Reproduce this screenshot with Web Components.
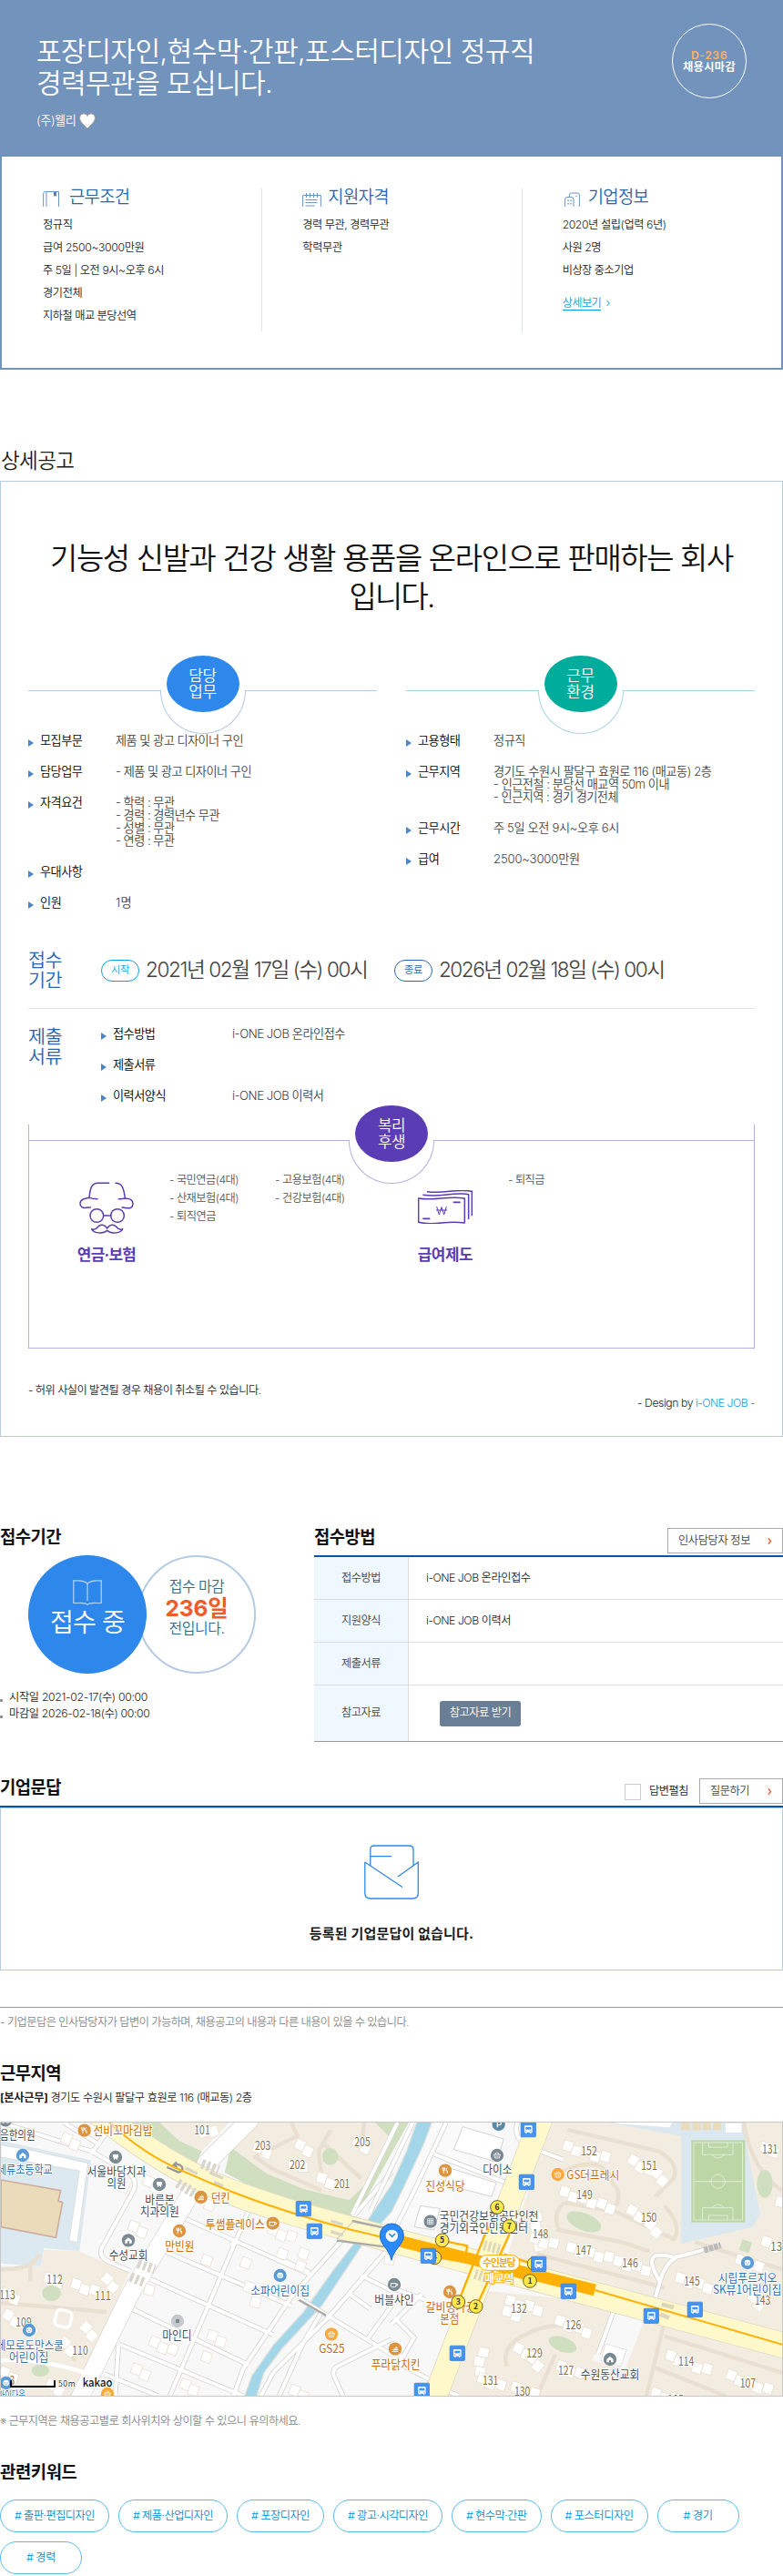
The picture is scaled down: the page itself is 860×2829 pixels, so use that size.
<!DOCTYPE html>
<html lang="ko">
<head>
<meta charset="utf-8">
<title>채용공고</title>
<style>
html,body{margin:0;padding:0;background:#fff}
body{width:860px;height:2829px;overflow:hidden;font-family:Inter,"Noto Sans CJK KR",sans-serif;font-size:13px;font-weight:350;line-height:1;color:#1c1c1c}
</style>
</head>
<body>
<job-page></job-page>
<script>
const make = (name, css, html) => {
  const tpl = document.createElement('template');
  tpl.innerHTML = `<style>:host{display:block;box-sizing:border-box}*{box-sizing:border-box}${css}</style>` + html;
  customElements.define(name, class extends HTMLElement {
    constructor() {
      super();
      this.attachShadow({mode: 'open'}).append(tpl.content.cloneNode(true));
    }
  });
};

make('job-page', '', `
<job-hero></job-hero>
<job-summary></job-summary>
<job-detail></job-detail>
<job-apply></job-apply>
<job-qna></job-qna>
<job-area></job-area>
<job-keywords></job-keywords>`);

make('job-hero', `
:host{background:#7193bc;height:172px;color:#fff}
.row{display:flex;justify-content:space-between;padding:39px 40px 0 40px}
h1{margin:0;font-size:32px;line-height:35px;font-weight:350}
h1 x-t{display:block}
.co{display:flex;align-items:center;gap:3px;height:20px;margin-top:14px;font-size:14px;font-weight:350}
.d{width:82px;height:82px;border:1px solid #fff;border-radius:50%;margin-top:-13px;display:flex;flex-direction:column;align-items:center;padding-top:27px;font-weight:700;font-size:13px;line-height:13px}
.d b{color:#ffb163;font-weight:600}`, `
<div class="row"><div>
<h1><x-t w="547">포장디자인,현수막·간판,포스터디자인 정규직</x-t><x-t w="259">경력무관을 모십니다.</x-t></h1>
<div class="co"><x-t w="43.500">(주)웰리</x-t><svg width="18" height="18" viewBox="0 0 18 18"><path d="M9 17.2C6 13.5.6 10 .6 5.600.6 2.700 2.600.9 5 .9 6.800.9 8.300 1.900 9 3.400 9.700 1.900 11.200.9 13 .9c2.400 0 4.400 1.800 4.400 4.700C17.400 10 12 13.500 9 17.200z" fill="#fff" stroke="#b39c84" stroke-width=".9"/></svg></div>
</div>
<div class="d"><b><x-t w="40">D-236</x-t></b><x-t w="58">채용시마감</x-t></div></div>`);

make('job-summary', `
:host{border:2px solid #7193bc;border-top:0;height:234px;padding-top:35px}
.g{display:grid;grid-template-columns:repeat(3,1fr);height:157px}
.c{padding-left:45px}.c+.c{border-left:1px solid #dde3ec}
h2{margin:0 0 7px;display:flex;align-items:center;font-size:20px;line-height:20px;font-weight:350;color:#2a64ad}
h2 svg{margin-top:3px}
p{margin:0;height:25px;line-height:25px;margin-bottom:0}
.m{color:#009fe3;display:flex;align-items:center;gap:6px;margin-top:16px}
.m x-t{border-bottom:1px solid #009fe3;line-height:15px}`, `
<div class="g">
<div class="c"><h2 style="gap:11px"><svg width="18" height="17" viewBox="0 0 18 17" fill="none" stroke="#6d96c6"><path d="M.6 17V2.500Q.6.5 2.500.5H17.500V17M4 .5V17"/><path d="M12 1h3v5l-1.500-1.500L12 6z" fill="#4f7fb8" stroke="none"/></svg><x-t w="66.500">근무조건</x-t></h2>
<p><x-t w="32.500">정규직</x-t></p><p><x-t w="111.500">급여 2500~3000만원</x-t></p><p><x-t w="133">주 5일 | 오전 9시~오후 6시</x-t></p><p><x-t w="43.500">경기전체</x-t></p><p><x-t w="102.500">지하철 매교 분당선역</x-t></p></div>
<div class="c" style="padding-left:44px"><h2 style="gap:7px"><svg width="21" height="17" viewBox="0 0 21 17" fill="none" stroke="#6d96c6"><path d="M.6 17V4.500H20.400V17M4.500 2v5M8.500 2v5M12.500 2v5M16.500 2v5M3.500 9.500h13M3.500 12.500h13M3.500 16h10"/></svg><x-t w="66.500">지원자격</x-t></h2>
<p><x-t w="95">경력 무관, 경력무관</x-t></p><p><x-t w="43.500">학력무관</x-t></p></div>
<div class="c" style="padding-left:44px"><h2 style="gap:9px;padding-left:2px"><svg width="17" height="17" viewBox="0 0 17 17" fill="none" stroke="#6d96c6"><path d="M.6 17V9Q.6 6.500 3 6.500H7.500Q10 6.500 10 9V17M5.500 6.500V4Q5.500 2 7.500 2H14Q16.400 2 16.400 4V17"/><path d="M4 9.500v1.500M7 9.500v1.500M4 13v1.500M7 13v1.500M13 5v1" stroke-width="1.400"/></svg><x-t w="66.500">기업정보</x-t></h2>
<p><x-t w="114">2020년 설립(업력 6년)</x-t></p><p><x-t w="42.500">사원 2명</x-t></p><p><x-t w="78">비상장 중소기업</x-t></p>
<div class="m"><x-t w="42.500">상세보기</x-t><svg width="4" height="6" viewBox="0 0 4 6"><path d="M.5 0 3.300 3 .5 6" fill="none" stroke="#009fe3"/></svg></div></div>
</div>`);

make('round-badge', `
:host{position:relative;height:1px;background:var(--line)}
.arc{position:absolute;left:50%;top:0;width:94px;height:48px;margin-left:-47px;border:1px solid var(--line);border-top:0;border-radius:0 0 47px 47px;background:#fff}
.gap{position:absolute;left:50%;top:-2px;width:88px;height:4px;margin-left:-44px;background:#fff}
.dot{position:absolute;left:50%;top:-38px;width:80px;height:62px;margin-left:-40px;border-radius:50%;background:var(--fill);color:#fff;display:flex;flex-direction:column;align-items:center;justify-content:center;font-size:18px;line-height:18px;font-weight:350;padding-top:0}`,
`<div class="arc"></div><div class="gap"></div><div class="dot"><slot></slot></div>`);

make('spec-row', `
:host{display:flex;min-height:34px;padding-bottom:20px;font-size:14px;line-height:14px}
svg{flex:none;margin:6px 7px 0 0}
.l{width:var(--label,83px);flex:none;color:#000}
.v{color:#444;display:flex;flex-direction:column;align-items:flex-start}`,
`<svg width="6" height="8" viewBox="0 0 6 8"><path d="M0 0 6 4 0 8z" fill="#4a86c8"/></svg><div class="l"><slot name="l"></slot></div><div class="v"><slot></slot></div>`);

make('job-detail', `
h2{margin:0;padding:87px 0 0 1px;font-size:24px;line-height:26px;font-weight:350;height:122px}
.box{border:1px solid #b4cbe3;height:1050px;padding:63px 30px 0}
h3{margin:0;font-size:35px;line-height:42px;font-weight:350;text-align:center;color:#111}
h3 x-t{display:block;margin:0 auto}
.two{display:grid;grid-template-columns:383px 383px;justify-content:space-between;margin-top:82px}
.rows{padding-top:47px}
.when{display:flex;align-items:center;height:62px;margin-top:17px}
.k{width:80px;flex:none;font-size:22px;line-height:22px;color:#2a64ad}.k x-t{display:block}
.pill{width:42px;height:24px;border:1px solid #0aa0dd;color:#0aa0dd;border-radius:12px;display:flex;align-items:center;justify-content:center;font-size:12px;margin-right:7px}
.date{font-size:24px;line-height:24px;color:#444;margin-top:-3px}
.docs{border-top:1px solid #dce6ef;display:flex;padding-top:20px;margin-top:10px;height:128px}
.docs .k{padding-top:0}
.wel{height:246px;border:1px solid #b9aee0;border-top:0;padding-top:17px}
.wg{display:grid;grid-template-columns:53px 64px 37px 116px 157px 60px 39px 1fr;padding-top:33px}
.i{display:flex;flex-direction:column;align-items:center;color:#5a3cb4;font-weight:700;font-size:18px;line-height:20px}
.li{color:#555;line-height:20px;display:flex;flex-direction:column;align-items:flex-start}
.note{line-height:14px;margin-top:39px}
.by{display:flex;justify-content:flex-end;gap:3px;line-height:14px}`, `
<h2><x-t w="80.500">상세공고</x-t></h2>
<div class="box">
<h3><x-t w="750">기능성 신발과 건강 생활 용품을 온라인으로 판매하는 회사</x-t><x-t w="93">입니다.</x-t></h3>
<div class="two">
<div><round-badge style="--line:#b4cbe3;--fill:#2e87ea"><x-t w="30.500">담당</x-t><x-t w="30.500">업무</x-t></round-badge>
<div class="rows">
<spec-row><x-t slot="l" w="46.500">모집부문</x-t><x-t w="140">제품 및 광고 디자이너 구인</x-t></spec-row>
<spec-row><x-t slot="l" w="46.500">담당업무</x-t><x-t w="149">- 제품 및 광고 디자이너 구인</x-t></spec-row>
<spec-row><x-t slot="l" w="46.500">자격요건</x-t><x-t w="64.500">- 학력 : 무관</x-t><x-t w="114">- 경력 : 경력년수 무관</x-t><x-t w="64.500">- 성별 : 무관</x-t><x-t w="64.500">- 연령 : 무관</x-t></spec-row>
<spec-row><x-t slot="l" w="46.500">우대사항</x-t></spec-row>
<spec-row><x-t slot="l" w="23.500">인원</x-t><x-t w="18">1명</x-t></spec-row>
</div></div>
<div><round-badge style="--line:#a9d8da;--fill:#00ad9d"><x-t w="30.500">근무</x-t><x-t w="30.500">환경</x-t></round-badge>
<div class="rows">
<spec-row><x-t slot="l" w="46.500">고용형태</x-t><x-t w="35">정규직</x-t></spec-row>
<spec-row><x-t slot="l" w="46.500">근무지역</x-t><x-t w="239.500">경기도 수원시 팔달구 효원로 116 (매교동) 2층</x-t><x-t w="193">- 인근전철 : 분당선 매교역 50m 이내</x-t><x-t w="137">- 인근지역 : 경기 경기전체</x-t></spec-row>
<spec-row><x-t slot="l" w="46.500">근무시간</x-t><x-t w="138">주 5일 오전 9시~오후 6시</x-t></spec-row>
<spec-row><x-t slot="l" w="23.500">급여</x-t><x-t w="95">2500~3000만원</x-t></spec-row>
</div></div>
</div>
<div class="when"><div class="k"><x-t w="37">접수</x-t><x-t w="37">기간</x-t></div>
<div class="pill"><x-t w="20">시작</x-t></div><div class="date" style="width:273px"><x-t w="243.500">2021년 02월 17일 (수) 00시</x-t></div>
<div class="pill" style="color:#2a64ad;border-color:#2a64ad"><x-t w="20">종료</x-t></div><div class="date"><x-t w="247.500">2026년 02월 18일 (수) 00시</x-t></div></div>
<div class="docs"><div class="k"><x-t w="37">제출</x-t><x-t w="37">서류</x-t></div>
<div style="--label:131px"><spec-row><x-t slot="l" w="46.500">접수방법</x-t><x-t w="124">i-ONE JOB 온라인접수</x-t></spec-row>
<spec-row><x-t slot="l" w="46.500">제출서류</x-t></spec-row>
<spec-row><x-t slot="l" w="58">이력서양식</x-t><x-t w="100.500">i-ONE JOB 이력서</x-t></spec-row></div></div>
<div class="wel"><round-badge style="--line:#b9aee0;--fill:#5a3cb4"><x-t w="30">복리</x-t><x-t w="30">후생</x-t></round-badge>
<div class="wg"><i></i>
<div class="i"><svg style="margin:12px 0 13px" width="60" height="57" viewBox="0 0 180 171" fill="none" stroke="#5a3cb4" stroke-width="4.500" stroke-linecap="round" stroke-linejoin="round"><path d="M98 4H61C40 4 36 22 33 52C17 55 3 58 3 71C3 82 12 87 22 85L37 84M120 4C142 4 147 22 151 54C168 54 177 60 177 72C177 84 168 88 158 86L141 84M33 52Q44 56 60 56M151 54Q140 57 130 56"/><circle cx="58" cy="111" r="22"/><circle cx="126" cy="111" r="22"/><path d="M80 111h24"/><path d="M92 153C84 140 70 138 62 148C54 158 46 158 41 155C46 168 78 174 92 160C106 174 138 168 143 155C138 158 130 158 122 148C114 138 100 140 92 153z"/></svg><x-t w="64.500">연금·보험</x-t></div><i></i>
<div class="li"><x-t w="76">- 국민연금(4대)</x-t><x-t w="76">- 산재보험(4대)</x-t><x-t w="51">- 퇴직연금</x-t></div>
<div class="li"><x-t w="76.500">- 고용보험(4대)</x-t><x-t w="76.500">- 건강보험(4대)</x-t></div>
<div class="i"><svg style="margin:21px 0 24px" width="60" height="37" viewBox="0 0 180 111" fill="none" stroke="#5a3cb4" stroke-width="4.500" stroke-linejoin="round"><path d="M2 27Q30 32 77 27T154 27V108Q122 103 77 108T2 106z"/><path d="M16 16Q50 21 95 15T167 14V96M30 5Q62 9 105 4T178 4V85"/><path d="M116 40h24M16 94h24" stroke-width="5"/><path d="M62 54l8 27 8-25 8 25 8-27M60 66h36" stroke-width="3"/></svg><x-t w="60.500">급여제도</x-t></div><i></i>
<div class="li"><x-t w="40">- 퇴직금</x-t></div></div></div>
<div class="note"><x-t w="255.500">- 허위 사실이 발견될 경우 채용이 취소될 수 있습니다.</x-t></div>
<div class="by"><x-t w="61">- Design by</x-t><x-t w="65" style="color:#0aa0dd">i-ONE JOB -</x-t></div>
</div>`);

make('line-button', `
:host{display:flex;align-items:center;justify-content:space-between;height:28px;border:1px solid #aaa;padding:0 11px;color:#444}`,
`<slot></slot><svg width="5" height="7" viewBox="0 0 5 7"><path d="M.8.3 3.500 3.500.8 6.700" fill="none" stroke="#f15a29" stroke-width="1.300"/></svg>`);

make('method-row', `
:host{display:flex;height:47px;border-bottom:1px solid #ddd}
.h{width:104px;background:#eff8fe;border-right:1px solid #ddd;display:flex;align-items:center;justify-content:center;color:#444}
.v{display:flex;align-items:center;padding-left:19px}`,
`<div class="h"><slot name="h"></slot></div><div class="v"><slot></slot></div>`);

make('job-apply', `
:host{display:flex;height:375px;padding-top:100px}
h2{margin:0;font-size:20px;line-height:22px;height:20px;font-weight:700;color:#111}
.l{width:345px}.r{width:515px}
.c{display:flex;padding:10px 0 0 31px}
.a{width:130px;height:130px;border-radius:50%;background:#2e87ea;color:#fff;display:flex;flex-direction:column;align-items:center;font-size:30px;line-height:30px;font-weight:350;padding-top:27px;z-index:1}
.b{width:130px;height:130px;border-radius:50%;border:2px solid #b4cbe3;margin-left:-10px;display:flex;flex-direction:column;align-items:center;font-size:17px;line-height:22px;font-weight:350;color:#34688f;padding-top:22px}
.b b{font-size:26px;line-height:24px;color:#f15a29;font-weight:700}
ul{list-style:none;margin:17px 0 0;padding:0}
li{display:flex;align-items:center;height:18px;gap:7px}
li i{width:3px;height:3px;background:#888;border-radius:1px;margin-top:7px}
.hd{display:flex;justify-content:space-between;height:30px}
.t{border-top:2px solid #0058a8}
.dl{margin-left:15px;width:89px;height:28px;border-radius:3px;background:#6a7f95;color:#fff;display:flex;align-items:center;justify-content:center}`, `
<div class="l"><h2><x-t w="67">접수기간</x-t></h2>
<div class="c"><div class="a"><svg width="32" height="28" viewBox="0 0 32 28" fill="none" stroke="#b5d5fa" stroke-width="1.200" style="margin-bottom:4px"><path d="M16 4V23M16 4Q12 .8 5 .8H.8V25.500H6Q14 25 16 27.500Q18 25 26 25.500H31.200V.8H27Q20 .8 16 4"/></svg><x-t w="82">접수 중</x-t></div>
<div class="b"><x-t w="60.500">접수 마감</x-t><b><x-t w="69">236일</x-t></b><x-t w="61">전입니다.</x-t></div></div>
<ul><li><i></i><x-t w="152">시작일 2021-02-17(수) 00:00</x-t></li><li><i></i><x-t w="154.500">마감일 2026-02-18(수) 00:00</x-t></li></ul></div>
<div class="r"><div class="hd"><h2><x-t w="67">접수방법</x-t></h2><line-button style="width:127px"><x-t w="79">인사담당자 정보</x-t></line-button></div>
<div class="t"><method-row><x-t slot="h" w="43">접수방법</x-t><x-t w="114.500">i-ONE JOB 온라인접수</x-t></method-row>
<method-row><x-t slot="h" w="43">지원양식</x-t><x-t w="93">i-ONE JOB 이력서</x-t></method-row>
<method-row><x-t slot="h" w="43">제출서류</x-t></method-row>
<method-row style="height:62px;border-color:#999"><x-t slot="h" w="43">참고자료</x-t><div class="dl"><x-t w="67.500">참고자료 받기</x-t></div></method-row></div></div>`);

make('job-qna', `
h2{margin:0;font-size:20px;line-height:22px;height:20px;font-weight:700;color:#111}
.hd{display:flex;height:30px}
.hd h2{flex:1}
.ck{width:18px;height:18px;border:1px solid #ccc;margin:6px 9px 0 0}
.lb{line-height:28px;margin-right:12px}
.box{border:1px solid #b4cbe3;height:179px;display:flex;flex-direction:column;align-items:center;padding-top:40px;font-size:16px;line-height:18px;font-weight:700}
.bar{border-top:2px solid #0058a8}
.note{margin-top:40px;border-top:1px solid #999;color:#888;line-height:14px;padding-top:9px;height:63px}`, `
<div class="hd"><h2><x-t w="67">기업문답</x-t></h2><div class="ck"></div><div class="lb"><x-t w="43">답변펼침</x-t></div><line-button style="width:92px"><x-t w="43">질문하기</x-t></line-button></div>
<div class="bar"></div>
<div class="box"><svg width="60" height="60" viewBox="0 0 60 60" fill="none" stroke="#2e87ea" stroke-width="1.300"><path d="M6.800 23V5Q6.800 1 10.800 1H49.500Q54 1 54 5V23M6.800 12.600H30"/><path d="M.8 19V53Q.8 59 6.800 59H53.500Q59.300 59 59.300 53V19L37 35M.8 19 42 46.500"/></svg><x-t w="180.500" style="margin-top:29px">등록된 기업문답이 없습니다.</x-t></div>
<div class="note"><x-t w="449">- 기업문답은 인사담당자가 답변이 가능하며, 채용공고의 내용과 다른 내용이 있을 수 있습니다.</x-t></div>`);

make('job-area', `
h2{margin:0;font-size:20px;line-height:22px;height:20px;font-weight:700;color:#111}
.ad{display:flex;gap:3px;line-height:14px;margin-top:10px;height:33px}
.n{color:#888;line-height:14px;margin-top:20px}`, `
<h2><x-t w="67">근무지역</x-t></h2>
<div class="ad"><b><x-t w="52.500">[본사근무]</x-t></b><x-t w="221">경기도 수원시 팔달구 효원로 116 (매교동) 2층</x-t></div>
<area-map></area-map>
<div class="n"><x-t w="330">※ 근무지역은 채용공고별로 회사위치와 상이할 수 있으니 유의하세요.</x-t></div>`);

make('job-keywords', `
:host{padding-top:39px}
h2{margin:0;font-size:20px;line-height:22px;height:20px;font-weight:700;color:#111}
.t{display:flex;flex-wrap:wrap;gap:10px;margin-top:20px}`, `
<h2><x-t w="84.500">관련키워드</x-t></h2>
<div class="t"><tag-pill><x-t w="88">&#35; 출판·편집디자인</x-t></tag-pill><tag-pill><x-t w="88">&#35; 제품·산업디자인</x-t></tag-pill><tag-pill><x-t w="64">&#35; 포장디자인</x-t></tag-pill><tag-pill><x-t w="88">&#35; 광고·시각디자인</x-t></tag-pill><tag-pill><x-t w="66.500">&#35; 현수막·간판</x-t></tag-pill><tag-pill><x-t w="75">&#35; 포스터디자인</x-t></tag-pill><tag-pill><x-t w="32">&#35; 경기</x-t></tag-pill><tag-pill><x-t w="32">&#35; 경력</x-t></tag-pill></div>`);

make('tag-pill', `
:host{display:flex;align-items:center;justify-content:center;height:36px;min-width:90px;padding:0 15px;border:1px solid #57bbea;border-radius:18px;color:#0090d6}`, `<slot></slot>`);

/* ---- map: one unit is a third of a pixel, R shifts to the right half ---- */
const R = 1290;
const poly = (p, f, s = 'none', w = 0) => `<polygon points="${p}" fill="${f}" stroke="${s}" stroke-width="${w}"/>`;
const line = (d, c, w, x = '') => `<path d="${d}" fill="none" stroke="${c}" stroke-width="${w}" stroke-linejoin="round" ${x}/>`;
const COL = {o: '#c96a0e', y: '#e08a20', b: '#2f72b8', d: '#43505a', n: '#86704c'};
const label = (x, y, w, t, c) => `<text x="${x}" y="${y}" fill="${COL[c]}" textLength="${w}" lengthAdjust="spacingAndGlyphs" text-anchor="middle">${t}</text>`;
const glyph = {
  f: '<path d="M-5-10v20M-9-10v7q0 3 4 3t4-3v-7M7-10q-5 4-4 11h4v9" stroke-width="3" fill="none"/>',
  t: '<path d="M-9-8Q-5-12 0-8Q5-12 9-8Q11-2 7 3L5 10 0 4-5 10-7 3Q-11-2-9-8z" fill="#fff" stroke="none"/>',
  c: '<path d="M-11-4v8q0 4 4 4h8q5 0 5-5v-7zM6-3q6-1 6 3t-6 4" fill="none" stroke-width="3"/>',
  k: '<circle r="10" fill="#fff" stroke="none"/><circle cx="-4" cy="-1" r="1.800" fill="#5a9ad5" stroke="none"/><circle cx="4" cy="-1" r="1.800" fill="#5a9ad5" stroke="none"/><path d="M-4 4q4 3 8 0" stroke="#5a9ad5" stroke-width="2" fill="none"/>',
  h: '<path d="M-11 10V0L0-9 11 0V10H3V3H-3V10z" fill="#fff" stroke="none"/>',
  s: '<path d="M-10-3H10L7 9H-7zM-6-3L-2-10M6-3L2-10M-3 1v5M3 1v5" fill="none" stroke-width="2.500"/>',
  g: '<path d="M-9-9H9V9H-9zM-3-9V9M3-9V9M-9-3H9M-9 3H9" fill="none" stroke-width="2"/>',
  m: '<rect x="-6" y="-6" width="12" height="12" fill="#7b8a92" stroke="none"/>',
  p: '<path d="M-4 10V-8H3q5 0 5 5t-5 5H-4" fill="none" stroke-width="4"/>',
  u: '<path d="M-10 8H10M-8 3H10M-4-2H8L2-8" fill="none" stroke-width="3"/>'
};
const poi = (x, y, c, g) => `<g transform="translate(${x} ${y})" stroke="#fff"><circle r="21.500" fill="${c}" stroke-width="2"/>${glyph[g]}</g>`;
const bus = (x, y) => `<g transform="translate(${x} ${y})"><rect x="-24.500" y="-24.500" width="49" height="49" rx="3" fill="#4393f6" stroke="#3478ce" stroke-width="2"/><path d="M-10-13H10q3 0 3 4V10H9v4H5v-4H-5v4H-9v-4h-4V-9q0-4 3-4z" fill="#fff"/><path d="M-9-8H9v8H-9z" fill="#4393f6"/><circle cx="-8" cy="5" r="2" fill="#4393f6"/><circle cx="8" cy="5" r="2" fill="#4393f6"/></g>`;
const exit = (x, y, n) => `<circle cx="${x}" cy="${y}" r="22" fill="#ffe94d" stroke="#6d6127" stroke-width="3"/><text x="${x}" y="${y + 9}" text-anchor="middle" font-size="26" font-weight="700" fill="#333" stroke="none">${n}</text>`;
const bldg = (x, y, a, n) => { let s = ''; for (let i = 0; i < n; i++) s += `<rect x="${i * 32}" y="${i % 2 ? 6 : -3}" width="32" height="34"/>`; return `<g transform="translate(${x} ${y}) rotate(${a})" fill="#fff" stroke="#e6dccb" stroke-width="2">${s}</g>`; };
const G = '#cfdfbf', BG = '#f3ece1', PATH = '#e9e0d2', W = '#fff', E = '#d6d4d0';
const streets = [
 'M3 36 300 130 420 200Q455 225 440 260L335 450Q325 480 360 495L430 525','M210 36 330 110','M300 140 350 70',
 'M560 330 1030 540','M530 455 960 640','M480 545 900 735','M435 650 820 835','M390 765 800 936','M345 865 520 936',
 'M820 325 560 936','M390 770 380 936','M780 420 760 440','M1130 420 960 610 800 850 770 936','M1290 440 1080 680 900 860 860 936',
 'M1290 200 1160 350','M985 615 1290 800','M1060 660 1000 760 920 936','M1190 540 1290 590','M1150 600 1220 650','M1290 750 1110 840Q1095 850 1100 870L1130 936',
 'M1200 540 1150 600','M935 490 1020 530','M1290 640 1210 750',
 `M${R+180} 36 ${R+80} 250 ${R+10} 390`,`M${R+140} 140 ${R+380} 235`,`M${R+415} 36Q${R+400} 80 ${R+440} 110`,
 `M${R} 580 ${R+110} 620`,`M${R+100} 600 ${R} 700`,`M${R+10} 680 ${R+75} 745 ${R+25} 830 ${R+130} 885`,`M${R} 760 ${R+60} 850`,
 `M${R+160} 910 ${R+220} 936`,`M${R+740} 635 ${R+680} 800`,`M${R+490} 130 ${R+565} 158`
];
const paths = [
 `M${R+580} 60 ${R+880} 130Q${R+950} 170 ${R+930} 220L${R+870} 280`,`M${R+560} 200Q${R+700} 130 ${R+730} 240Q${R+760} 260 ${R+740} 310`,
 `M${R+570} 300Q${R+530} 330 ${R+550} 390L${R+760} 430 ${R+850} 460`,`M${R+570} 300 ${R+740} 330 ${R+930} 420Q${R+960} 380 ${R+900} 310`,
 `M${R+480} 470 ${R+900} 580`,`M${R+380} 840Q${R+360} 780 ${R+430} 740Q${R+560} 670 ${R+640} 740 ${R+660} 830L${R+600} 936`,
 `M${R+540} 800 ${R+480} 936`,`M${R+900} 740 ${R+1287} 860`,`M${R+900} 690 ${R+840} 936`,`M${R+860} 840 ${R+1100} 936`,`M${R+1160} 36Q${R+1190} 200 ${R+1287} 260`,
 `M${R+1000} 430 ${R+1287} 520`,'M960 36 980 80 840 150 900 190','M1090 60 1050 130 1060 220','M1060 100 1190 220','M900 190 1060 260','M1200 36 1190 130',
 'M3 520Q110 520 130 470','M3 630 350 660','M100 500 100 560','M200 770 250 820'
];
const MAP = `
<rect x="0" y="30" width="2583" height="912" fill="#f8f8f8"/>
${poly('1375,30 1600,30 1450,380 1290,350', '#fafafa')}
${poly('400,30 520,30 590,95 665,130 640,190 520,120', G)}
${poly('520,30 760,30 665,130 590,95', BG)}
${poly('830,30 1350,30 1170,350 1030,320 850,260 740,200 760,120', G)}
${poly('840,30 1230,30 1290,90 1215,230 1150,292 1000,255 880,205 770,125', BG)}
${poly('3,95 300,160 262,460 145,450 135,510 3,500', '#dde9f1')}
${poly('3,110 115,130 290,170 255,430 228,425 262,195 3,150', W, E, 2)}
${poly('3,225 200,260 192,295 206,299 184,415 3,380', '#eadcba', '#cfac9d', 5)}
${poly('3,510 135,510 145,455 260,460 425,530 280,860 240,936 3,936', BG)}
${poly(`${R+525},30 ${R+1290},30 ${R+1290},740 ${R+900},640 ${R+380},480`, BG)}
${poly(`${R+310},590 ${R+700},630 ${R+1290},800 ${R+1290},940 ${R+180},940`, BG)}
${poly(`${R+680},30 ${R+1165},30 ${R+1165},90 ${R+1215},340 ${R+1190},380 ${R+955},435 ${R+955},80`, '#dce8f0')}
${poly(`${R+745},640 ${R+840},670 ${R+770},850 ${R+660},820`, '#f8f8f8')}
${paths.map(d => line(d, PATH, 13)).join('')}
${poly('1375,30 1425,30 1395,110 1330,250 1290,330 1200,430 1060,640 930,780 870,860 845,940 805,940 830,870 900,770 1000,660 1100,520 1170,430 1210,360 1290,240 1340,130', '#a4d6ea', '#dfe3df', 4)}
${streets.map(d => line(d, E, 17)).join('')}${streets.map(d => line(d, W, 12)).join('')}
${line('M1310 36 1160 340M1360 36 1220 330', E, 16)}${line('M1310 36 1160 340M1360 36 1220 330', W, 12)}
${line('M830 20 680 170M640 250 520 450 430 600 260 950', E, 62)}${line('M830 20 680 170M640 250 520 450 430 600 260 950', W, 58)}
${line(`M${R+870} 610 ${R+885} 560Q${R+840} 490 ${R+870} 475 ${R+900} 470 ${R+930} 480Q${R+990} 470 ${R+1040} 450M${R+885} 560Q${R+900} 500 ${R+940} 480`, E, 17)}${line(`M${R+870} 610 ${R+885} 560Q${R+840} 490 ${R+870} 475 ${R+900} 470 ${R+930} 480Q${R+990} 470 ${R+1040} 450M${R+885} 560Q${R+900} 500 ${R+940} 480`, W, 12)}
${line(`M${R+1030} 457 ${R+1085} 440`, '#bbb', 20, 'stroke-dasharray="14 3"')}
${line('M3 820Q120 810 280 860', W, 14)}
<rect x="183" y="655" width="52" height="54" rx="14" fill="none" stroke="#fff" stroke-width="10" transform="rotate(12 210 680)"/>
${[[430,360,20,2],[210,70,22,2],[480,210,25,2],[700,480,110,1],[810,560,20,2],[920,450,20,1],[990,450,20,1],[980,490,20,1],[500,740,22,3],[690,720,20,2],[600,880,20,2],[440,830,20,2],[670,790,20,1],[480,570,15,1],[830,610,15,1],[960,900,20,2],[890,370,20,3],[680,290,20,1],[370,210,20,2],[1270,470,10,1],[800,480,20,1]].map(b => bldg(...b)).join('')}
${[[650,60,-20,2],[840,100,20,2],[950,160,0,2],[980,90,25,2],[1050,200,20,3],[1170,80,25,2],[150,530,15,2],[240,550,18,3],[350,530,40,2],[280,690,40,2],[20,650,30,4],[210,740,40,2],[10,580,20,2],[160,880,25,2],[5,840,20,2]].map(b => bldg(...b)).join('')}
${[[570,95,16,5],[790,140,30,3],[870,180,40,2],[560,245,18,6],[785,305,28,3],[850,350,40,2],[490,330,80,4],[460,400,14,3],[580,430,14,5],[735,475,14,4],[940,530,16,4],[380,605,15,4],[370,640,15,2],[545,670,20,4],[410,760,25,3],[460,790,40,2],[320,780,100,3],[290,860,20,3],[550,820,20,3],[400,890,18,3],[910,785,20,5],[1110,850,20,5],[860,910,15,4],[1220,100,15,2],[1225,410,20,2],[1190,590,40,2],[1140,470,20,3],[1270,280,15,1]].map(b => bldg(R + b[0], b[1], b[2], b[3])).join('')}
${poly(`${R+235},50 ${R+370},90 ${R+345},165 ${R+205},125`, W, E, 3)}
${poly(`${R+190},185 ${R+345},235 ${R+330},280 ${R+175},240`, W, E, 3)}
${poly(`${R+95},310 ${R+160},320 ${R+140},390 ${R+75},380`, W, E, 3)}
${poly(`${R+705},765 ${R+775},785 ${R+755},840 ${R+690},820`, W, E, 2)}
<rect x="${R+1100}" y="38" width="54" height="32" fill="#fff" stroke="${E}"/>${[955,992,1025,1060].map(x => `<rect x="${R+x}" y="34" width="27" height="27" fill="#eadcba"/>`).join('')}
${poly(`${R+700},30 ${R+930},30 ${R+915},52 ${R+750},40`, W)}
<rect x="${R+988}" y="94" width="177" height="271" fill="#bcd6a5"/><g fill="none" stroke="#fff" stroke-width="2" opacity=".85"><rect x="${R+996}" y="102" width="160" height="255"/><path d="M${R+996} 230h160M${R+1025} 102v40h100v-40M${R+1045} 102v15h62v-15M${R+1025} 357v-40h100v40M${R+1045} 357v-15h62v15M${R+1055} 142q21 22 42 0M${R+1055} 317q21-22 42 0"/><circle cx="${R+1076}" cy="230" r="23"/></g>
<g fill="${G}"><ellipse cx="1088" cy="148" rx="26" ry="28"/><ellipse cx="170" cy="598" rx="31" ry="26"/><ellipse cx="133" cy="853" rx="29" ry="20"/><ellipse cx="${R+634}" cy="363" rx="60" ry="28" transform="rotate(22 ${R+634} 363)"/><ellipse cx="${R+564}" cy="767" rx="48" ry="24" transform="rotate(20 ${R+564} 767)"/><ellipse cx="${R+1230}" cy="238" rx="26" ry="46"/><rect x="${R+1150}" y="425" width="34" height="36" transform="rotate(18 ${R+1166} 442)"/></g>
${line('M280 -30C430 90 560 180 700 240S1000 345 1250 412L2600 775', '#dedac9', 86)}
${line(`M${R+502} 0 ${R+136} 960`, '#dedac9', 80)}
${line('M280 -30C430 90 560 180 700 240S1000 345 1250 412L2600 775', '#fff8ca', 81)}
${line(`M${R+502} 0 ${R+136} 960`, '#fff8ca', 75)}
${line('M1160 360 1290 388M1110 425 1290 448M985 620 1075 672', '#aaa', 7)}
${line('M1163 362 1110 420', '#bbb', 3)}
<g stroke="#d9d6c6" stroke-width="10" fill="none">${line('M665 172 720 192M585 235 650 275', '#d8d5cc', 32, 'stroke-dasharray="10 8"')}${line('M455 500 510 520M430 545 480 565', '#d8d5cc', 32, 'stroke-dasharray="10 8"')}<path d="M610 185 650 205M690 200 735 220M705 232 735 245M1090 360 1130 372M1090 395 1130 408"/></g>
${line(`M${R+305} 440 ${R+360} 455M${R+275} 535 ${R+325} 550`, '#dcd7b8', 34, 'stroke-dasharray="8 7"')}
${line(`M${R+890} 635 ${R+930} 645M${R+885} 668 ${R+915} 680`, '#dcd7b8', 14)}
<path d="M550 183 588 200Q606 195 600 182 590 170 575 176M582 166 572 176 584 186" fill="none" stroke="#999" stroke-width="7"/>
${line('M345 20C430 105 520 160 600 195S800 285 1000 345 1180 392 1250 412', '#ffb000', 6)}
${line(`M1310 425 ${R+670} 588`, '#ffb000', 38)}${line(`M${R+670} 588 ${R+1290} 768`, '#ffb000', 6)}
${line(`M${R+165} 425 ${R+250} 442 ${R+240} 495 ${R+150} 480M${R+310} 400 ${R+220} 628M${R+395} 390 ${R+285} 630M${R+370} 470 ${R+460} 500M${R+370} 530 ${R+460} 558M${R+345} 320 ${R+315} 400`, '#ffb000', 7)}
<g font-size="39" font-weight="400" stroke="#fff" stroke-width="6" paint-order="stroke" stroke-linejoin="round">
${poi(18,28,'#7b8a92','h')}${label(58,90,116,'음한의원','d')}
${[[666,75,101],[866,126,203],[980,188,202],[1127,251,201],[1194,113,205],[180,566,112],[24,617,113],[339,620,111],[78,709,109],[264,800,110],[R+651,143,152],[R+849,191,151],[R+636,287,149],[R+848,362,150],[R+491,416,148],[R+633,470,147],[R+786,512,146],[R+990,572,145],[R+1223,635,143],[R+1247,137,131],[R+420,662,132],[R+599,716,126],[R+471,809,129],[R+575,866,127],[R+326,899,131],[R+431,937,130],[R+971,836,114],[R+1174,908,107],[R+936,964,105]].map(n => label(n[0], n[1], 52, n[2], 'n')).join('')}
${label(R+1268,460,38,'13','n')}${label(40,900,16,'3','n')}
${poi(278,62,'#dc9440','f')}${label(405,76,195,'선비꼬마김밥','o')}
${poi(75,144,'#5a9ad5','h')}${label(82,203,182,'세류초등학교','b')}
${poi(381,150,'#7b8a92','t')}${label(384,211,195,'서울바담치과','d')}${label(384,250,63,'의원','d')}
${poi(525,240,'#7b8a92','t')}${label(526,302,97,'바른본','d')}${label(526,342,129,'치과의원','d')}
${poi(662,282,'#dc9440','u')}${label(727,296,62,'던킨','o')}
${label(775,383,195,'투썸플레이스','o')}${poi(899,368,'#dc9440','c')}
${poi(591,393,'#dc9440','f')}${label(592,456,96,'만빈원','o')}
${poi(423,424,'#7b8a92','h')}${label(423,486,128,'수성교회','d')}
${poi(923,540,'#5a9ad5','k')}${label(923,602,194,'소파어린이집','b')}
${poi(585,690,'#c5c8cc','m')}${label(583,750,97,'마인디','d')}
${poi(96,720,'#5a9ad5','k')}${label(98,784,222,'세모로도만스쿨','b')}${label(95,822,130,'어린이집','b')}
${poi(20,894,'#5a9ad5','k')}${label(38,948,90,'아이다음','b')}
${poi(1092,733,'#f9a93c','s')}${label(1093,795,85,'GS25','o')}${poi(354,930,'#f9a93c','s')}
${poi(R+12,782,'#dc9440','u')}${label(R+14,845,162,'푸라닭치킨','o')}
${poi(R+9,570,'#7b8a92','c')}${label(R+9,632,130,'버블샤인','d')}
${poi(R+353,42,'#5e8aa8','p')}${poi(R+348,144,'#7b8a92','s')}${label(R+349,205,97,'다이소','d')}
${poi(R+177,194,'#dc9440','f')}${label(R+177,257,130,'진성식당','o')}
${poi(R+548,207,'#f9a93c','s')}${label(R+664,222,174,'GS더프레시','o')}
${poi(R+128,362,'#7b8a92','g')}${label(R+321,357,327,'국민건강보험공단인천','d')}${label(R+304,395,292,'경기외국인민원센터','d')}
${poi(R+192,594,'#dc9440','f')}${label(R+195,656,165,'갈비명가궁','o')}${label(R+191,695,63,'본점','o')}
${poi(R+1173,498,'#5a9ad5','k')}${label(R+1173,561,194,'시립푸르지오','b')}${label(R+1172,600,226,'SK뷰1어린이집','b')}
${poi(R+720,816,'#7b8a92','h')}${label(R+720,878,194,'수원동산교회','d')}
</g>
${bus(1000,320)}${bus(1036,394)}${bus(R+451,59)}${bus(R+445,232)}${exit(R+142,481,4)}${bus(R+121,475)}${exit(R+470,501,8)}${bus(R+485,502)}${bus(R+583,592)}${bus(R+856,673)}${bus(R+1000,652)}${bus(R+217,796)}${bus(R+100,919)}
${exit(R+348,315,6)}${exit(R+388,378,7)}${exit(R+167,424,5)}${exit(R+456,558,1)}${exit(R+278,642,2)}${exit(R+220,627,3)}
<rect x="${R+288}" y="473" width="134" height="50" rx="25" fill="#fff" stroke="#ffb000" stroke-width="3"/>
<text x="${R+355}" y="510" font-size="33" font-weight="700" fill="#f9ab10" text-anchor="middle" textLength="110">수인분당</text>
<text x="${R+355}" y="563" font-size="36" font-weight="700" fill="#fff" stroke="#ffb000" stroke-width="5" paint-order="stroke" text-anchor="middle" textLength="98">매교역</text>
<path d="M1290 490C1282 450 1252 440 1252 408A39 39 0 0 1 1330 408C1330 440 1298 450 1290 490z" fill="#2b8af8" stroke="#1a68c6" stroke-width="3"/><circle cx="1291" cy="409" r="20" fill="#fff"/><path d="M1282 402 1292 412 1302 402" fill="none" stroke="#2b8af8" stroke-width="5"/>
<path d="M36 886V906H180V886" fill="none" stroke="#000" stroke-width="6"/>
<text x="192" y="906" font-size="26" fill="#222" stroke="#fff" stroke-width="4" paint-order="stroke" textLength="56">50m</text>
<text x="272" y="907" font-size="36" font-weight="500" fill="#111" stroke="#fff" stroke-width="4" paint-order="stroke" textLength="98" lengthAdjust="spacingAndGlyphs">kakao</text>`;
make('area-map', `
:host{height:302px;border:1px solid #c8c8c8;overflow:hidden}
svg{display:block;font-family:"Noto Sans CJK KR",sans-serif}`, `<svg width="858" height="300" viewBox="3 36 2574 900">${MAP}</svg>`);

/* Text run tracked to a given measure (attribute w, in px). */
customElements.define('x-t', class extends HTMLElement {
  constructor() {
    super();
    this.attachShadow({mode: 'open'}).innerHTML = '<style>:host{display:inline-block;white-space:nowrap}span{display:inline-block;font-size:.94em;vertical-align:top}</style><span><slot></slot></span>';
  }
  connectedCallback() {
    const w = parseFloat(this.getAttribute('w')), n = [...this.textContent].length;
    const natural = this.shadowRoot.querySelector('span').getBoundingClientRect().width;
    this.style.letterSpacing = ((w - natural) / n).toFixed(3) + 'px';
    this.style.width = w + 'px';
  }
});
</script>
</body>
</html>
